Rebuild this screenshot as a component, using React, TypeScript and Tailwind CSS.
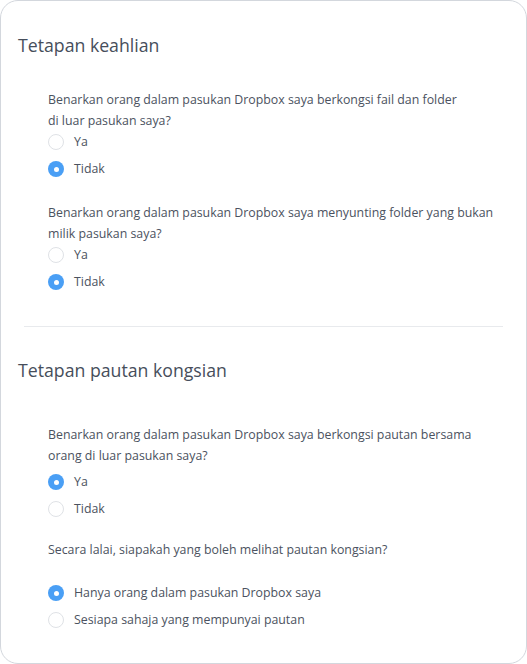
import { useState } from 'react';

type Option = { value: string; label: string };

interface QuestionProps {
  lines: string[];
  options: Option[];
  initial: string;
  className?: string;
  optionsClassName?: string;
}

function Radio({ checked }: { checked: boolean }) {
  return checked ? (
    <span className="w-4 h-4 rounded-full bg-[#4a9ff5] flex items-center justify-center shrink-0">
      <span className="w-[5px] h-[5px] rounded-full bg-white" />
    </span>
  ) : (
    <span className="w-4 h-4 rounded-full border border-[#dfe2e6] bg-white shrink-0" />
  );
}

function Question({ lines, options, initial, className = '', optionsClassName = '' }: QuestionProps) {
  const [value, setValue] = useState(initial);
  return (
    <div className={className}>
      <p className="text-[12.35px] leading-[21px] text-[#4b5260] whitespace-nowrap">
        {lines.map((l, i) => (
          <span key={i} className="block">{l}</span>
        ))}
      </p>
      <div className={`flex flex-col gap-[5px] ${optionsClassName}`}>
        {options.map(o => (
          <label
            key={o.value}
            className="h-[22px] flex items-center gap-[10px] cursor-pointer"
            onClick={() => setValue(o.value)}
          >
            <Radio checked={value === o.value} />
            <span className="text-[12.35px] text-[#4b5260]">{o.label}</span>
          </label>
        ))}
      </div>
    </div>
  );
}

const YES_NO: Option[] = [
  { value: 'ya', label: 'Ya' },
  { value: 'tidak', label: 'Tidak' },
];

export default function App() {
  return (
    <div
      className="w-[527px] h-[664px] bg-white"
      style={{ fontFamily: '"Open Sans", "Noto Sans", sans-serif' }}
    >
      <div className="h-full border border-[#d3d7dd] rounded-[18px] pt-[32px]">
        <h2 className="pl-[17px] text-[17.7px] leading-[24px] text-[#464e5b]">Tetapan keahlian</h2>
        <div className="pl-[47px]">
          <Question
            className="mt-[32px]"
            lines={[
              'Benarkan orang dalam pasukan Dropbox saya berkongsi fail dan folder',
              'di luar pasukan saya?',
            ]}
            options={YES_NO}
            initial="tidak"
          />
          <Question
            className="mt-[22px]"
            lines={[
              'Benarkan orang dalam pasukan Dropbox saya menyunting folder yang bukan',
              'milik pasukan saya?',
            ]}
            options={YES_NO}
            initial="tidak"
          />
        </div>

        <div className="mx-[23px] mt-[33px] border-t border-[#e8eaed]" />

        <h2 className="mt-[31px] pl-[17px] text-[17.7px] leading-[24px] text-[#464e5b]">Tetapan pautan kongsian</h2>
        <div className="pl-[47px]">
          <Question
            className="mt-[42px]"
            lines={[
              'Benarkan orang dalam pasukan Dropbox saya berkongsi pautan bersama',
              'orang di luar pasukan saya?',
            ]}
            options={YES_NO}
            initial="ya"
            optionsClassName="mt-[5px]"
          />
          <Question
            className="mt-[19px]"
            lines={['Secara lalai, siapakah yang boleh melihat pautan kongsian?']}
            options={[
              { value: 'team', label: 'Hanya orang dalam pasukan Dropbox saya' },
              { value: 'anyone', label: 'Sesiapa sahaja yang mempunyai pautan' },
            ]}
            initial="team"
            optionsClassName="mt-[22px]"
          />
        </div>
      </div>
    </div>
  );
}
